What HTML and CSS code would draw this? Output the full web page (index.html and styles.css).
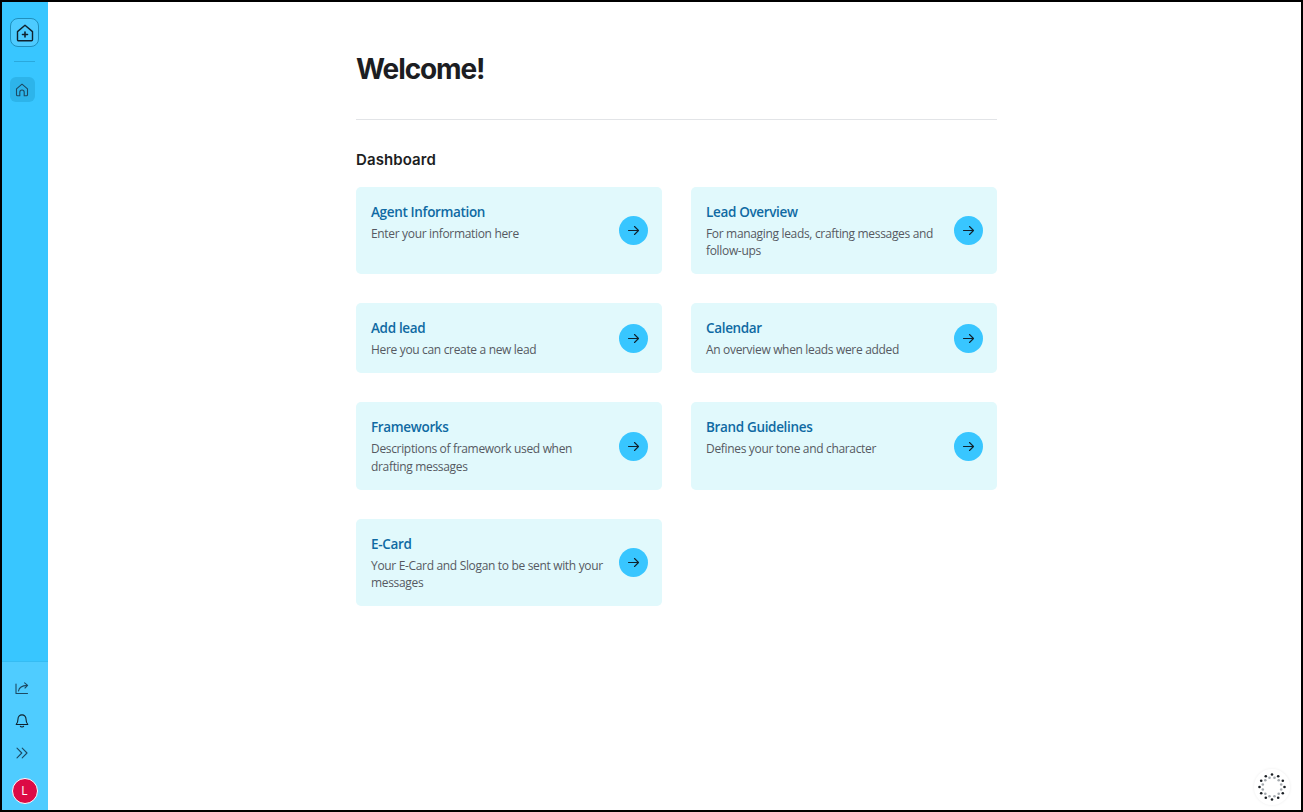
FILE: index.html
```html
<!DOCTYPE html>
<html lang="en">
<head>
    <meta charset="UTF-8">
    <meta name="viewport" content="width=device-width, initial-scale=1.0">
    <title>Dashboard</title>
    <link rel="stylesheet" href="styles.css">
</head>
<body>
    <div class="app">
        <aside class="sidebar">
            <div class="side-top">
                <a class="logo-btn">
                    <svg width="18" height="18" viewBox="0 0 18 18" fill="none" stroke="#10222e" stroke-width="1.4" stroke-linejoin="round" stroke-linecap="round"><path d="M1.5 7.6 9 1.2l7.5 6.4v8.2a1 1 0 0 1-1 1h-13a1 1 0 0 1-1-1z"/><path d="M9 8v5M6.5 10.5h5" stroke-width="1.6"/></svg>
                </a>
                <div class="side-rule"></div>
                <a class="nav-btn">
                    <svg width="14" height="14" viewBox="0 0 14 14" fill="none" stroke="#1d4a63" stroke-width="1.1" stroke-linejoin="round" stroke-linecap="round"><path d="M1.5 5.8 7 1.2l5.5 4.6v6a1 1 0 0 1-1 1H9.2V9.2a2.2 2.2 0 0 0-4.4 0v3.6H2.5a1 1 0 0 1-1-1z"/></svg>
                </a>
            </div>
            <div class="side-bottom">
                <a class="tool-btn">
                    <svg width="14" height="14" viewBox="0 0 14 14" fill="none" stroke="#1d4a63" stroke-width="1.1" stroke-linejoin="round" stroke-linecap="round"><path d="M1 3v9.5h11.5"/><path d="M3.5 10c.6-3.2 3-5.2 8.5-5.6"/><path d="M9.6 1.8 12.6 4.4 10 7"/></svg>
                </a>
                <a class="tool-btn">
                    <svg width="14" height="15" viewBox="0 -0.7 14 15" fill="none" stroke="#10222e" stroke-width="1.1" stroke-linejoin="round" stroke-linecap="round"><path d="M7 1.2c-2.5 0-4 1.9-4 4.2 0 3-.9 4.4-1.8 5.4h11.6c-.9-1-1.8-2.4-1.8-5.4 0-2.3-1.5-4.2-4-4.2z"/><path d="M5.4 12.6c.4 1 2.8 1 3.2 0"/></svg>
                </a>
                <a class="tool-btn">
                    <svg width="14" height="14" viewBox="0 0 14 14" fill="none" stroke="#1d4a63" stroke-width="1.1" stroke-linejoin="round" stroke-linecap="round"><path d="M2 2.2 6.8 7 2 11.8"/><path d="M7.2 2.2 12 7l-4.8 4.8"/></svg>
                </a>
                <div class="avatar">L</div>
            </div>
        </aside>

        <main class="main">
            <div class="content">
                <h1>Welcome!</h1>
                <hr class="rule">
                <h2>Dashboard</h2>
                <div class="cards">
                    <a class="card">
                        <div class="card-text">
                            <h3>Agent Information</h3>
                            <p>Enter your information here</p>
                        </div>
                        <span class="go"><svg width="13" height="13" viewBox="0 0 13 13" fill="none" stroke="#10222e" stroke-width="1.1" stroke-linecap="round" stroke-linejoin="round"><path d="M1.5 6.5h10M7.5 2.5l4 4-4 4"/></svg></span>
                    </a>
                    <a class="card">
                        <div class="card-text">
                            <h3>Lead Overview</h3>
                            <p>For managing leads, crafting messages and follow-ups</p>
                        </div>
                        <span class="go"><svg width="13" height="13" viewBox="0 0 13 13" fill="none" stroke="#10222e" stroke-width="1.1" stroke-linecap="round" stroke-linejoin="round"><path d="M1.5 6.5h10M7.5 2.5l4 4-4 4"/></svg></span>
                    </a>
                    <a class="card">
                        <div class="card-text">
                            <h3>Add lead</h3>
                            <p>Here you can create a new lead</p>
                        </div>
                        <span class="go"><svg width="13" height="13" viewBox="0 0 13 13" fill="none" stroke="#10222e" stroke-width="1.1" stroke-linecap="round" stroke-linejoin="round"><path d="M1.5 6.5h10M7.5 2.5l4 4-4 4"/></svg></span>
                    </a>
                    <a class="card">
                        <div class="card-text">
                            <h3>Calendar</h3>
                            <p>An overview when leads were added</p>
                        </div>
                        <span class="go"><svg width="13" height="13" viewBox="0 0 13 13" fill="none" stroke="#10222e" stroke-width="1.1" stroke-linecap="round" stroke-linejoin="round"><path d="M1.5 6.5h10M7.5 2.5l4 4-4 4"/></svg></span>
                    </a>
                    <a class="card">
                        <div class="card-text">
                            <h3>Frameworks</h3>
                            <p>Descriptions of framework used when drafting messages</p>
                        </div>
                        <span class="go"><svg width="13" height="13" viewBox="0 0 13 13" fill="none" stroke="#10222e" stroke-width="1.1" stroke-linecap="round" stroke-linejoin="round"><path d="M1.5 6.5h10M7.5 2.5l4 4-4 4"/></svg></span>
                    </a>
                    <a class="card">
                        <div class="card-text">
                            <h3>Brand Guidelines</h3>
                            <p>Defines your tone and character</p>
                        </div>
                        <span class="go"><svg width="13" height="13" viewBox="0 0 13 13" fill="none" stroke="#10222e" stroke-width="1.1" stroke-linecap="round" stroke-linejoin="round"><path d="M1.5 6.5h10M7.5 2.5l4 4-4 4"/></svg></span>
                    </a>
                    <a class="card">
                        <div class="card-text">
                            <h3>E-Card</h3>
                            <p>Your E-Card and Slogan to be sent with your messages</p>
                        </div>
                        <span class="go"><svg width="13" height="13" viewBox="0 0 13 13" fill="none" stroke="#10222e" stroke-width="1.1" stroke-linecap="round" stroke-linejoin="round"><path d="M1.5 6.5h10M7.5 2.5l4 4-4 4"/></svg></span>
                    </a>
                </div>
            </div>
        </main>
    </div>

    <div class="spinner">
        <svg width="30" height="30" viewBox="0 0 30 30">
            <g fill="#1a1f24">
                <circle cx="15" cy="2.5" r="1.3"/><circle cx="21.2" cy="4.2" r="1.3"/><circle cx="25.8" cy="8.8" r="1.3"/><circle cx="27.5" cy="15" r="1.3"/><circle cx="25.8" cy="21.2" r="1.3"/><circle cx="21.2" cy="25.8" r="1.3"/><circle cx="15" cy="27.5" r="1.3"/><circle cx="8.8" cy="25.8" r="1.3"/><circle cx="4.2" cy="21.2" r="1.3"/><circle cx="2.5" cy="15" r="1.3"/><circle cx="4.2" cy="8.8" r="1.3"/><circle cx="8.8" cy="4.2" r="1.3"/>
            </g>
            <g fill="#a3a8ad">
                <circle cx="17.5" cy="5.8" r="1.3"/><circle cx="21.7" cy="8.3" r="1.3"/><circle cx="24.2" cy="12.5" r="1.3"/><circle cx="24.2" cy="17.5" r="1.3"/><circle cx="21.7" cy="21.7" r="1.3"/><circle cx="17.5" cy="24.2" r="1.3"/><circle cx="12.5" cy="24.2" r="1.3"/><circle cx="8.3" cy="21.7" r="1.3"/><circle cx="5.8" cy="17.5" r="1.3"/><circle cx="5.8" cy="12.5" r="1.3"/><circle cx="8.3" cy="8.3" r="1.3"/><circle cx="12.5" cy="5.8" r="1.3"/>
            </g>
        </svg>
    </div>
</body>
</html>
```

FILE: styles.css
```css
* {
    box-sizing: border-box;
}
html, body {
    height: 100%;
}
body {
    margin: 0;
    background-color: #fff;
    font-family: "Open Sans", "Noto Sans", sans-serif;
    color: #1c1d22;
}
.app {
    display: flex;
    height: 812px;
    border: 2px solid #000;
    overflow: hidden;
}
.sidebar {
    width: 46px;
    flex-shrink: 0;
    display: flex;
    flex-direction: column;
    justify-content: space-between;
    background-color: #38c6ff;
}
.side-top {
    display: flex;
    flex-direction: column;
    align-items: center;
    padding-top: 16px;
}
.logo-btn {
    width: 29px;
    height: 29px;
    margin-left: -1px;
    display: flex;
    align-items: center;
    justify-content: center;
    border: 1px solid #1f8fbd;
    border-radius: 8px;
    background-color: #4dcbff;
}
.side-rule {
    width: 21px;
    height: 1px;
    margin: 14px 0 15px -2px;
    background-color: #2aa9dd;
}
.nav-btn {
    width: 25px;
    height: 25px;
    margin-left: -6px;
    display: flex;
    align-items: center;
    justify-content: center;
    border-radius: 6px;
    background-color: #2db4ea;
}
.side-bottom {
    display: flex;
    flex-direction: column;
    align-items: center;
    height: 149px;
    padding-top: 16px;
    background-color: #4fccff;
    border-top: 1px solid #35bcf3;
}
.tool-btn {
    height: 20px;
    margin-bottom: 12.5px;
    margin-left: -6px;
    display: flex;
    align-items: center;
}
.avatar {
    width: 26px;
    height: 26px;
    margin-top: 2px;
    margin-left: -1px;
    border-radius: 50%;
    border: 1px solid #fff;
    background-color: #dc0a45;
    color: #fff;
    font-size: 12px;
    line-height: 24px;
    text-align: center;
}
.main {
    flex: 1;
    padding-left: 308px;
}
.content {
    width: 641px;
}
h1 {
    margin: 0;
    padding-top: 47px;
    font-family: Inter, sans-serif;
    font-size: 28px;
    line-height: 40px;
    font-weight: 700;
    letter-spacing: -1.1px;
}
.rule {
    height: 1px;
    margin: 30px 0 0;
    border: 0;
    background-color: #e2e4e7;
}
h2 {
    margin: 31px 0 17.75px;
    font-family: Inter, sans-serif;
    font-size: 15px;
    line-height: 18px;
    font-weight: 600;
    letter-spacing: 0.1px;
}
.cards {
    display: grid;
    grid-template-columns: 306px 306px;
    gap: 29px;
}
.card {
    display: flex;
    justify-content: space-between;
    align-items: center;
    padding: 15px 14px 14.5px 15px;
    border-radius: 5px;
    background-color: #e1f9fc;
    cursor: pointer;
}
.card-text {
    align-self: flex-start;
    width: 240px;
}
h3 {
    margin: 0 0 3px;
    font-size: 13.5px;
    line-height: 20px;
    font-weight: 560;
    letter-spacing: -0.34px;
    color: #0f6aa3;
}
.card p {
    margin: 0;
    font-size: 12px;
    line-height: 17.5px;
    letter-spacing: -0.33px;
    color: #565962;
}
.go {
    width: 29px;
    height: 29px;
    flex-shrink: 0;
    display: flex;
    align-items: center;
    justify-content: center;
    border-radius: 50%;
    background-color: #38c6ff;
}
.spinner {
    position: fixed;
    right: 13px;
    bottom: 7px;
    width: 36px;
    height: 36px;
    display: flex;
    align-items: center;
    justify-content: center;
    border-radius: 50%;
    background-color: #fff;
    box-shadow: 0 0 3px rgba(0,0,0,0.08);
}
```
